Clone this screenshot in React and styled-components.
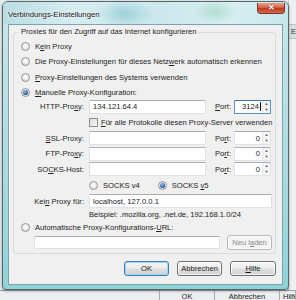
import styled, { createGlobalStyle } from 'styled-components';

const GlobalStyle = createGlobalStyle`
    html, body {
        margin: 0;
        padding: 0;
        background: #e6e9eb;
    }
    body {
        font-family: 'Liberation Sans', Arial, sans-serif;
        color: #222;
    }
`

const Stage = styled.div`
    position: relative;
    width: 296px;
    height: 300px;
    overflow: hidden;
    display: grid;
    grid-template-rows: 290px 10px;
    background: #e8ebed;
`

const Backdrop = styled.div`
    display: flex;
    justify-content: flex-end;
`

const RightStrip = styled.div`
    width: 7px;
    display: flex;
    flex-direction: column;
    border-left: 1px solid #c9d0d4;
    background: #eef1f2;
    font-size: 7.5px;
    color: #333;
    overflow: hidden;
    white-space: nowrap;

    > span {
        margin-top: 24px;
        padding: 2px 0 2px 2px;
        background: #d7dde0;
        border-top: 1px solid #b8c0c4;
        border-bottom: 1px solid #b8c0c4;
    }
`

const BottomBar = styled.div`
    display: grid;
    grid-template-columns: 160px 55px 65px 1fr;
    background: #eceeef;
    border-top: 1px solid #9aa3a7;
`

const BottomCell = styled.div`
    border-right: 1px solid #a7adb1;
    font-size: 7.5px;
    text-align: ${p => p.$align || 'center'};
    padding: 1px 0 0 ${p => p.$pl || 0}px;
    color: #222;
    white-space: nowrap;
    overflow: hidden;
`

const Window = styled.div`
    position: absolute;
    left: 2px;
    top: 1px;
    width: 287px;
    height: 289px;
    box-sizing: border-box;
    border: 1px solid #55666c;
    border-radius: 6px 6px 4px 4px;
    background: linear-gradient(180deg, #c9e7ec 0%, #b3dfe4 40%, #8fd3d7 100%);
    display: flex;
    flex-direction: column;
    padding: 0 5px 4px 5px;
    box-shadow: 0 1px 3px rgba(0, 0, 0, 0.35);
`

const TitleBar = styled.div`
    height: 22px;
    display: flex;
    align-items: flex-start;
    margin: 0 -5px;
    padding: 0 3px 0 5px;
    border-radius: 5px 5px 0 0;
    background:
        radial-gradient(ellipse 30px 14px at 122px 12px, rgba(120, 190, 200, 0.55), transparent),
        radial-gradient(ellipse 22px 12px at 212px 10px, rgba(130, 200, 170, 0.45), transparent),
        linear-gradient(90deg, #b9dde3 0%, #d6edf1 25%, #cbe8ed 55%, #d9eff2 80%, #c6e6eb 100%);
`

const Title = styled.span`
    margin-top: 8px;
    font-size: 7.7px;
    color: #111;
    text-shadow: 0 0 4px #fff, 0 0 2px #fff;
`

const CloseButton = styled.div`
    margin-left: auto;
    margin-top: 1px;
    width: 28px;
    height: 11px;
    box-sizing: border-box;
    border: 1px solid #7c3427;
    border-top: none;
    border-radius: 0 0 4px 4px;
    background: linear-gradient(180deg, #e8a493 0%, #d2624a 45%, #c13b22 55%, #d76a4f 100%);
    color: #fff;
    font-size: 8px;
    font-weight: bold;
    line-height: 10px;
    text-align: center;
    text-shadow: 0 0 2px #6b1a0c;
`

const Client = styled.div`
    flex: 1;
    display: flex;
    flex-direction: column;
    background: #f0f0f0;
    border: 1px solid #7fa3ad;
    font-size: 7.6px;
`

const Group = styled.fieldset`
    margin: 2px 6px 0 4px;
    padding: 0 0 3px 0;
    border: 1px solid #d5dde1;
    border-radius: 3px;
    display: flex;
    flex-direction: column;
    min-width: 0;
`

const Legend = styled.legend`
    margin-left: 5px;
    padding: 0 2px;
    line-height: 10px;
    font-size: 7.6px;
`

const Row = styled.div`
    height: ${p => p.$h}px;
    display: flex;
    align-items: center;
    padding-left: ${p => p.$indent || 0}px;
    white-space: nowrap;
`

const Text = styled.span`
    white-space: pre;
`

const Radio = styled.span`
    width: 9px;
    height: 9px;
    box-sizing: border-box;
    border-radius: 50%;
    border: 1px solid #969696;
    background: radial-gradient(circle at 50% 40%, #ffffff 0%, #e6e6e6 60%, #d0d0d0 100%);
    margin: 0 5px 0 ${p => p.$ml || 0}px;
    flex: none;
    display: flex;
    align-items: center;
    justify-content: center;

    &::after {
        content: '';
        display: ${p => (p.$checked ? 'block' : 'none')};
        width: 5px;
        height: 5px;
        border-radius: 50%;
        background: radial-gradient(circle at 40% 35%, #8fc4ef 0%, #2c6aa8 55%, #123f6c 100%);
    }
`

const Checkbox = styled.span`
    width: 9px;
    height: 9px;
    box-sizing: border-box;
    border: 1px solid #8f8f8f;
    background: linear-gradient(135deg, #dcdcdc 0%, #f7f7f7 100%);
    margin-right: 3px;
    flex: none;
`

const FieldLabel = styled.span`
    width: 70px;
    text-align: right;
    margin-right: 5px;
    flex: none;
`

const TextField = styled.div`
    width: ${p => p.$w}px;
    height: ${p => p.$fh || 14}px;
    box-sizing: border-box;
    background: #fff;
    border: 1px solid ${p => (p.$focus ? '#5a93c4' : '#dde3e8')};
    border-top-color: ${p => (p.$focus ? '#3d7bad' : '#abadb3')};
    border-radius: 1px;
    display: flex;
    align-items: center;
    padding: 0 3px;
    flex: none;
    overflow: hidden;
`

const PortLabel = styled.span`
    margin: 0 6px 0 9px;
    width: 13px;
    flex: none;
`

const PortField = styled(TextField)`
    padding: 0 0 0 3px;
    justify-content: flex-end;
`

const PortValue = styled.span`
    padding-right: 1px;
    border-right: ${p => (p.$caret ? '1px solid #000' : 'none')};
`

const Spinner = styled.div`
    width: 7px;
    height: 100%;
    margin-left: 1px;
    display: flex;
    flex-direction: column;
    border-left: 1px solid #e3e6e8;
    background: #f4f4f4;
    flex: none;

    > span {
        flex: 1;
        display: flex;
        align-items: center;
        justify-content: center;
        font-size: 4px;
        color: #555;
        line-height: 1;
    }
`

const Hint = styled.span`
    padding-left: 75px;
`

const UrlRow = styled.div`
    height: 16px;
    display: flex;
    align-items: center;
    padding-left: 20px;
    gap: 7px;
`

const Button = styled.div`
    width: ${p => p.$w}px;
    height: 15px;
    box-sizing: border-box;
    border: 1px solid ${p => (p.$default ? '#3c7fb1' : p.$disabled ? '#b5b9bc' : '#707070')};
    border-radius: 3px;
    background: ${p => (p.$disabled
        ? '#f4f4f4'
        : 'linear-gradient(180deg, #f6f6f6 0%, #ececec 48%, #dedede 52%, #d2d2d2 100%)')};
    box-shadow: ${p => (p.$default ? 'inset 0 0 0 1px #9fd8f4' : 'inset 0 0 0 1px rgba(255,255,255,0.75)')};
    color: ${p => (p.$disabled ? '#8a8a8a' : '#1a1a1a')};
    display: flex;
    align-items: center;
    justify-content: center;
    white-space: pre;
    flex: none;
`

const ButtonBar = styled.div`
    display: flex;
    justify-content: flex-end;
    gap: 8px;
    margin-top: 7px;
    padding-right: 6px;
`

function PortInput({ value, focus }) {
    return (
        <PortField $w={37} $focus={focus}>
            <PortValue $caret={focus}>{value}</PortValue>
            <Spinner><span>▲</span><span>▼</span></Spinner>
        </PortField>
    )
}

export default function App() {
    return (
        <>
            <GlobalStyle />
            <Stage>
                <Backdrop>
                    <RightStrip><span>Er</span></RightStrip>
                </Backdrop>
                <BottomBar>
                    <BottomCell />
                    <BottomCell>OK</BottomCell>
                    <BottomCell>Abbrechen</BottomCell>
                    <BottomCell $align="left" $pl={3}>Hilfe</BottomCell>
                </BottomBar>

                <Window>
                    <TitleBar>
                        <Title>Verbindungs-Einstellungen</Title>
                        <CloseButton>✕</CloseButton>
                    </TitleBar>
                    <Client>
                        <Group>
                            <Legend>Proxies für den Zugriff auf das Internet konfigurieren</Legend>
                            <Row $h={2} />
                            <Row $h={15}><Radio $ml={7} /><Text>K<u>e</u>in Proxy</Text></Row>
                            <Row $h={15}><Radio $ml={7} /><Text>Die Proxy-Einstellungen für dieses Netz<u>w</u>erk automatisch erkennen</Text></Row>
                            <Row $h={16}><Radio $ml={7} /><Text><u>P</u>roxy-Einstellungen des Systems verwenden</Text></Row>
                            <Row $h={14}><Radio $ml={7} $checked /><Text><u>M</u>anuelle Proxy-Konfiguration:</Text></Row>
                            <Row $h={15}>
                                <FieldLabel>HTTP-Pro<u>x</u>y:</FieldLabel>
                                <TextField $w={117}>134.121.64.4</TextField>
                                <PortLabel><u>P</u>ort:</PortLabel>
                                <PortInput value="3124" focus />
                            </Row>
                            <Row $h={16} $indent={75}><Checkbox /><Text><u>F</u>ür alle Protokolle diesen Proxy-Server verwenden</Text></Row>
                            <Row $h={16}>
                                <FieldLabel><u>S</u>SL-Proxy:</FieldLabel>
                                <TextField $w={117} />
                                <PortLabel>Po<u>r</u>t:</PortLabel>
                                <PortInput value="0" />
                            </Row>
                            <Row $h={15}>
                                <FieldLabel>FTP-Pro<u>x</u>y:</FieldLabel>
                                <TextField $w={117} />
                                <PortLabel>Po<u>r</u>t:</PortLabel>
                                <PortInput value="0" />
                            </Row>
                            <Row $h={16}>
                                <FieldLabel>SO<u>C</u>KS-Host:</FieldLabel>
                                <TextField $w={117} />
                                <PortLabel>Po<u>r</u>t:</PortLabel>
                                <PortInput value="0" />
                            </Row>
                            <Row $h={17} $indent={75}>
                                <Radio /><Text>SOCKS v4</Text>
                                <Radio $ml={18} $checked /><Text>SOCKS <u>v</u>5</Text>
                            </Row>
                            <Row $h={14}>
                                <FieldLabel>Kei<u>n</u> Proxy für:</FieldLabel>
                                <TextField $w={183}>localhost, 127.0.0.1</TextField>
                            </Row>
                            <Row $h={12}><Hint>Beispiel: .mozilla.org, .net.de, 192.168.1.0/24</Hint></Row>
                            <Row $h={14}><Radio $ml={7} /><Text>Automatische Proxy-Konfigurations-<u>U</u>RL:</Text></Row>
                            <UrlRow>
                                <TextField $w={186} $fh={13} />
                                <Button $w={45} $disabled>Neu l<u>a</u>den</Button>
                            </UrlRow>
                        </Group>
                        <ButtonBar>
                            <Button $w={45} $default>OK</Button>
                            <Button $w={45}>Abbrechen</Button>
                            <Button $w={46}><u>H</u>ilfe</Button>
                        </ButtonBar>
                    </Client>
                </Window>
            </Stage>
        </>
    )
}
